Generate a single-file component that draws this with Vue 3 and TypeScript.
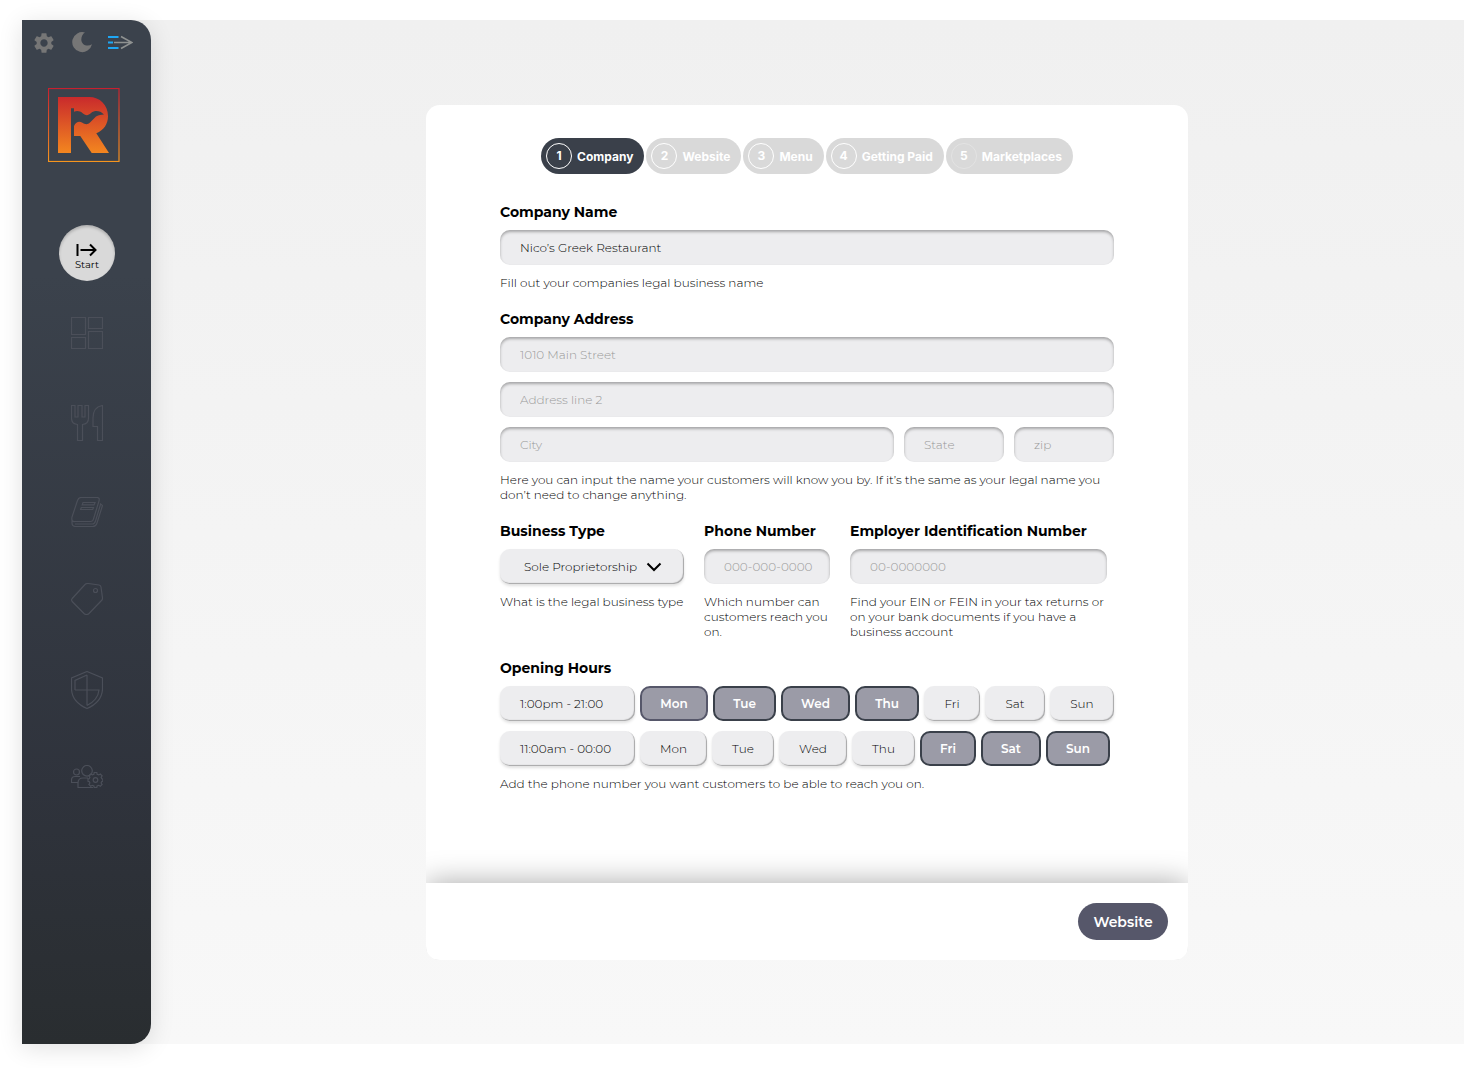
<script setup lang="ts">
import { ref } from 'vue'

interface Day {
  name: string
  on: boolean
  width: number
  soft?: boolean
}
interface Shift {
  hours: string
  days: Day[]
}

const steps = ['Company', 'Website', 'Menu', 'Getting Paid', 'Marketplaces']
const companyName = ref('Nico’s Greek Restaurant')
const businessType = ref('Sole Proprietorship')

const shifts = ref<Shift[]>([
  {
    hours: '1:00pm - 21:00',
    days: [
      { name: 'Mon', on: true, width: 68, soft: true },
      { name: 'Tue', on: true, width: 63 },
      { name: 'Wed', on: true, width: 69 },
      { name: 'Thu', on: true, width: 64 },
      { name: 'Fri', on: false, width: 56 },
      { name: 'Sat', on: false, width: 60 },
      { name: 'Sun', on: false, width: 64 },
    ],
  },
  {
    hours: '11:00am - 00:00',
    days: [
      { name: 'Mon', on: false, width: 67 },
      { name: 'Tue', on: false, width: 62 },
      { name: 'Wed', on: false, width: 68 },
      { name: 'Thu', on: false, width: 63 },
      { name: 'Fri', on: true, width: 56 },
      { name: 'Sat', on: true, width: 60 },
      { name: 'Sun', on: true, width: 64 },
    ],
  },
])
</script>

<template>
  <div class="page">
    <aside class="sidebar">
      <div class="tools">
        <button type="button" aria-label="Settings">
          <svg width="20" height="22" viewBox="2.2 1.6 19.6 20.8" fill="#767676">
            <path d="M19.14 12.94c.04-.3.06-.61.06-.94 0-.32-.02-.64-.07-.94l2.03-1.58c.18-.14.23-.41.12-.61l-1.92-3.32c-.12-.22-.37-.29-.59-.22l-2.39.96c-.5-.38-1.03-.7-1.62-.94l-.36-2.54c-.04-.24-.24-.41-.48-.41h-3.84c-.24 0-.43.17-.47.41l-.36 2.54c-.59.24-1.13.57-1.62.94l-2.39-.96c-.22-.08-.47 0-.59.22L2.74 8.87c-.12.21-.08.47.12.61l2.03 1.58c-.05.3-.09.63-.09.94s.02.64.07.94l-2.03 1.58c-.18.14-.23.41-.12.61l1.92 3.32c.12.22.37.29.59.22l2.39-.96c.5.38 1.03.7 1.62.94l.36 2.54c.05.24.24.41.48.41h3.84c.24 0 .44-.17.47-.41l.36-2.54c.59-.24 1.13-.56 1.62-.94l2.39.96c.22.08.47 0 .59-.22l1.92-3.32c.12-.22.07-.47-.12-.61l-2.01-1.58zM12 15.6c-1.98 0-3.6-1.62-3.6-3.6s1.62-3.6 3.6-3.6 3.6 1.62 3.6 3.6-1.62 3.6-3.6 3.6z" />
          </svg>
        </button>
        <button type="button" aria-label="Dark mode">
          <svg width="22" height="22" viewBox="-2 0 22 22" fill="#767676">
            <path d="M13 .5A10 10 0 1 0 20 12.300C15 15.500 9.300 12.500 9.300 7.500C9.300 4.500 11 1.500 13 .5Z" />
          </svg>
        </button>
        <button type="button" aria-label="Expand menu">
          <svg width="25" height="22" viewBox="0 0 25 22" fill="none">
            <path d="M0 5H10.500M0 10.500H5M0 16H10.500" stroke="#1ea7f5" stroke-width="2" />
            <path d="M6 10.500H23M13 4.500L24 10.500L13 16.500" stroke="#8f9291" stroke-width="1.600" />
          </svg>
        </button>
      </div>

      <svg class="logo" width="72" height="74" viewBox="0 0 72 74" role="img" aria-label="R">
        <defs>
          <linearGradient id="frame" x1="0" y1="0" x2="0" y2="1">
            <stop offset="0" stop-color="#c8202f" />
            <stop offset="1" stop-color="#f6951e" />
          </linearGradient>
          <linearGradient id="letter" x1="0" y1="0" x2="0" y2="1">
            <stop offset="0" stop-color="#c92a2c" />
            <stop offset="1" stop-color="#f3861f" />
          </linearGradient>
        </defs>
        <rect x=".5" y=".5" width="70.500" height="73" fill="none" stroke="url(#frame)" stroke-width="1.200" />
        <path fill="url(#letter)" d="M10 9H41C52 9 60 17 60 28C60 36 56 42 48.300 45.300L61 65H43.700L32.300 48H26V38C28 34 31 33 34 34.500C37 36.500 39.500 37 42 34.500L48 28.500C51 26.500 53 27 56 26.500C52 22.500 47 22 43 25C40 27.500 38.500 28 35 25.500C32 23 29 22.500 26 23.800V20.300H23V65H10Z" />
      </svg>

      <nav aria-label="Main">
        <a href="#" class="start">
          <svg width="22" height="14" viewBox="0 0 22 14" fill="none" stroke="#000" stroke-width="2">
            <path d="M1.500 1V13M4.500 7H19.500M14 1.500L19.500 7L14 12.500" />
          </svg>
          <span>Start</span>
        </a>
        <a href="#" aria-label="Dashboard">
          <svg width="32" height="32" viewBox="0 0 32 32">
            <path d="M.5 .5H14.500V17.500H.5ZM17.500 .5H31.500V11.500H17.500ZM17.500 14.500H31.500V31.500H17.500ZM.5 20.500H14.500V31.500H.5Z" />
          </svg>
        </a>
        <a href="#" aria-label="Menu">
          <svg width="32" height="36" viewBox="0 0 32 36">
            <path d="M.5 .5H4V12H7V.5H11V12H14V.5H17.500V13Q17.500 19 11.500 19.500V35.500H6.500V19.500Q.5 19 .5 13ZM31.500 .5Q22 2 22 13V21.500H26.500V35.500H31.500Z" />
          </svg>
        </a>
        <a href="#" aria-label="Ledger">
          <svg width="32" height="30" viewBox="0 0 32 30">
            <path d="M10 .5H26Q29 .5 28 4L22.500 22Q22 24.500 19.500 24.500H4Q0 25 1 20L6.500 3.500Q7.500 .5 10 .5ZM1 22.500V26Q1 29.500 5 29.500H21.500Q25 29.500 26 26L31.500 8.500L29 6.500M4 27H21.500Q23.500 27 24.500 24L29.500 7.500M12 5.500H24L23 7.800H11.200ZM10.300 10.500H22.500L21.700 12.500H9.600Z" />
          </svg>
        </a>
        <a href="#" aria-label="Offers">
          <svg width="32" height="32" viewBox="0 0 32 32">
            <path d="M14 1.500Q15.500 .4 17 .5L28 2Q29.700 2.200 30 4L31.500 15Q31.600 16.500 30.500 17.500L18 30.500Q15.500 32.500 13 30.500L1.200 18.500Q0 17 1.200 15.500Z" />
            <circle cx="24.500" cy="7.500" r="2" />
          </svg>
        </a>
        <a href="#" aria-label="Security">
          <svg width="32" height="38" viewBox="0 0 32 38">
            <path d="M16 .5L31.500 7V18Q31 31 16 37.500Q1 31 .5 18V7ZM16 4V34.500M4 19H28Q27 29 16 34.500M16 4L4 9.500V19" />
          </svg>
        </a>
        <a href="#" aria-label="Team">
          <svg width="32" height="23" viewBox="0 0 32 23">
            <circle cx="5.500" cy="7" r="3" />
            <circle cx="16" cy="5.800" r="5.300" />
            <circle cx="24.500" cy="15" r="2.300" />
            <path d="M9 11.500H4Q.5 11.500 .5 15V17.500H6.500M17 13H12Q7 13 7 18V22.500H22M22.900 9.200L23.200 7.500H25.800L26.100 9.200L27.800 9.900L29.300 9L31.100 10.800L30.100 12.300L30.800 13.700L31.800 14V16.300L30.800 16.600L30.100 18L31.100 19.500L29.300 21.200L27.800 20.300L26.100 21L25.800 22.500H23.200L22.900 21L21.200 20.300L19.700 21.200L17.900 19.500L18.900 18L18.200 16.600L17 16.300V14L18.200 13.700L18.900 12.300L17.900 10.800L19.700 9L21.200 9.900Z" />
          </svg>
        </a>
      </nav>
    </aside>

    <main>
      <form class="card" @submit.prevent>
        <div class="body">
          <ol class="steps">
            <li v-for="(step, i) in steps" :key="step">
              <button type="button" class="step" :class="{ current: i === 0, last: i === 4 }">
                <span class="num">{{ i + 1 }}</span>{{ step }}
              </button>
            </li>
          </ol>

          <section class="group">
            <label class="title" for="name">Company Name</label>
            <input id="name" v-model="companyName" type="text" />
            <p>Fill out your companies legal business name</p>
          </section>

          <section class="group">
            <label class="title" for="street">Company Address</label>
            <div class="lines">
              <input id="street" type="text" placeholder="1010 Main Street" />
              <input type="text" aria-label="Address line 2" placeholder="Address line 2" />
              <div class="locality">
                <input type="text" aria-label="City" placeholder="City" />
                <input type="text" aria-label="State" placeholder="State" />
                <input type="text" aria-label="Zip" placeholder="zip" />
              </div>
            </div>
            <p>Here you can input the name your customers will know you by. If it’s the same as your legal name you don’t need to change anything.</p>
          </section>

          <div class="columns">
            <section class="group">
              <label class="title" for="type">Business Type</label>
              <div class="picker">
                <select id="type" v-model="businessType">
                  <option>Sole Proprietorship</option>
                </select>
                <svg width="16" height="10" viewBox="0 0 16 10" fill="none" stroke="#000" stroke-width="2">
                  <path d="M1.500 1.500L8 8L14.500 1.500" />
                </svg>
              </div>
              <p>What is the legal business type</p>
            </section>
            <section class="group">
              <label class="title" for="phone">Phone Number</label>
              <input id="phone" type="tel" placeholder="000-000-0000" />
              <p>Which number can customers reach you on.</p>
            </section>
            <section class="group">
              <label class="title" for="ein">Employer Identification Number</label>
              <input id="ein" type="text" placeholder="00-0000000" />
              <p>Find your EIN or FEIN in your tax returns or on your bank documents if you have a business account</p>
            </section>
          </div>

          <section class="group">
            <h2 class="title">Opening Hours</h2>
            <div class="lines">
              <div v-for="shift in shifts" :key="shift.hours" class="shift">
                <button type="button" class="chip hours">{{ shift.hours }}</button>
                <button
                  v-for="day in shift.days"
                  :key="day.name"
                  type="button"
                  class="chip"
                  :class="{ on: day.on, soft: day.soft }"
                  :aria-pressed="day.on"
                  :style="{ width: day.width + 'px' }"
                  @click="day.on = !day.on"
                >{{ day.name }}</button>
              </div>
            </div>
            <p>Add the phone number you want customers to be able to reach you on.</p>
          </section>
        </div>
        <footer>
          <button type="submit" class="next">Website</button>
        </footer>
      </form>
    </main>
  </div>
</template>

<style>
body {
  margin: 0;
  background: #fff;
}
</style>

<style scoped>
* {
  box-sizing: border-box;
}
.page {
  display: flex;
  margin: 20px 0 24px 22px;
  min-height: calc(100vh - 44px);
  background: linear-gradient(#f0f0f0, #f8f8f8);
  font-family: Montserrat, Inter, sans-serif;
  font-size: 12px;
  line-height: 15px;
  font-weight: 300;
  color: #000;
}
button,
input,
select {
  margin: 0;
  border: 0;
  font: inherit;
  color: inherit;
}
button {
  padding: 0;
  background: none;
  cursor: pointer;
}
.sidebar {
  flex: none;
  display: flex;
  flex-direction: column;
  width: 129px;
  border-radius: 0 20px 20px 0;
  background: linear-gradient(#3b424c 0%, #3b424c 25%, #2f333c 75%, #292d30 100%);
  box-shadow: 0 4px 24px rgba(0, 0, 0, 0.12);
}
.tools {
  display: flex;
  justify-content: space-between;
  padding: 12px 18px 0 12px;
}
.tools svg,
nav svg {
  display: block;
}
.logo {
  margin: 34px 0 0 26px;
}
nav {
  display: flex;
  flex-direction: column;
  align-items: center;
  gap: 56px;
  margin-top: 63px;
  padding-left: 1px;
}
nav a {
  fill: none;
  stroke: #4b4f59;
  stroke-width: 1.2;
}
nav .start {
  display: flex;
  flex-direction: column;
  align-items: center;
  justify-content: center;
  width: 56px;
  height: 56px;
  margin-bottom: -20px;
  padding-top: 8px;
  border-radius: 50%;
  background: #d9d9d9;
  box-shadow: inset 0 2px 3px rgba(0, 0, 0, 0.2);
  font-size: 10px;
  font-weight: 400;
  color: #000;
  text-decoration: none;
}
main {
  flex: 1;
  padding: 85px 21px 84px 20px;
}
.card {
  max-width: 762px;
  margin: 0 auto;
  border-radius: 14px;
  background: #fff;
  overflow: hidden;
}
.body {
  display: flex;
  flex-direction: column;
  gap: 20px;
  padding: 33px 74px 92px;
}
.steps {
  display: flex;
  justify-content: center;
  gap: 2px;
  margin: 0 0 9px;
  padding: 0;
  list-style: none;
}
.step {
  display: flex;
  align-items: center;
  gap: 5px;
  height: 36px;
  padding: 0 11px 0 5px;
  border-radius: 18px;
  background: #d9d9d9;
  font-family: Inter, sans-serif;
  font-weight: 700;
  color: #fff;
  white-space: nowrap;
}
.step.current {
  background: #3a404a;
}
.num {
  width: 26px;
  height: 26px;
  border: 1px solid #fff;
  border-radius: 50%;
  line-height: 24px;
  text-align: center;
}
.last .num {
  border-color: #e3e3e3;
}
.title {
  display: block;
  margin: 0 0 9px;
  font-size: 14px;
  line-height: 18px;
  font-weight: 700;
  color: #000;
  white-space: nowrap;
}
p {
  margin: 10px 0 0;
}
input,
select,
.chip {
  display: block;
  height: 35px;
  border-radius: 10px;
  background: #ededef;
}
input {
  width: 100%;
  padding: 0 10px 0 20px;
  box-shadow: inset 0 2px 3px rgba(0, 0, 0, 0.3);
}
input::placeholder {
  color: #999;
  opacity: 1;
}
.lines {
  display: flex;
  flex-direction: column;
  gap: 10px;
}
.locality {
  display: grid;
  grid-template-columns: 1fr 100px 100px;
  gap: 10px;
}
.columns {
  display: grid;
  grid-template-columns: 184px 126px 257px;
  gap: 20px;
}
.picker {
  position: relative;
}
select {
  appearance: none;
  width: 100%;
  padding: 0 44px 0 24px;
}
.picker svg {
  position: absolute;
  top: 13px;
  right: 22px;
  pointer-events: none;
}
select,
.chip {
  box-shadow: 0 2px 3px rgba(0, 0, 0, 0.12), inset -1px -1px 1px rgba(0, 0, 0, 0.3);
}
.shift {
  display: flex;
  gap: 5px;
}
.chip {
  flex: none;
  text-align: center;
}
.hours {
  width: 135px;
  padding-left: 20px;
  text-align: left;
}
.on {
  border: 2px solid #3a404a;
  background: #9b9ba7;
  box-shadow: none;
  font-weight: 600;
  color: #fff;
}
.on.soft {
  border-color: #56576a;
}
footer {
  display: flex;
  justify-content: flex-end;
  padding: 20px;
  background: #fff;
  box-shadow: 0 0 30px rgba(0, 0, 0, 0.35);
  clip-path: inset(-40px 0 0 0);
}
.next {
  width: 90px;
  height: 37px;
  padding-top: 2px;
  border-radius: 19px;
  background: #56576a;
  font-size: 14px;
  font-weight: 600;
  color: #fff;
}
</style>
